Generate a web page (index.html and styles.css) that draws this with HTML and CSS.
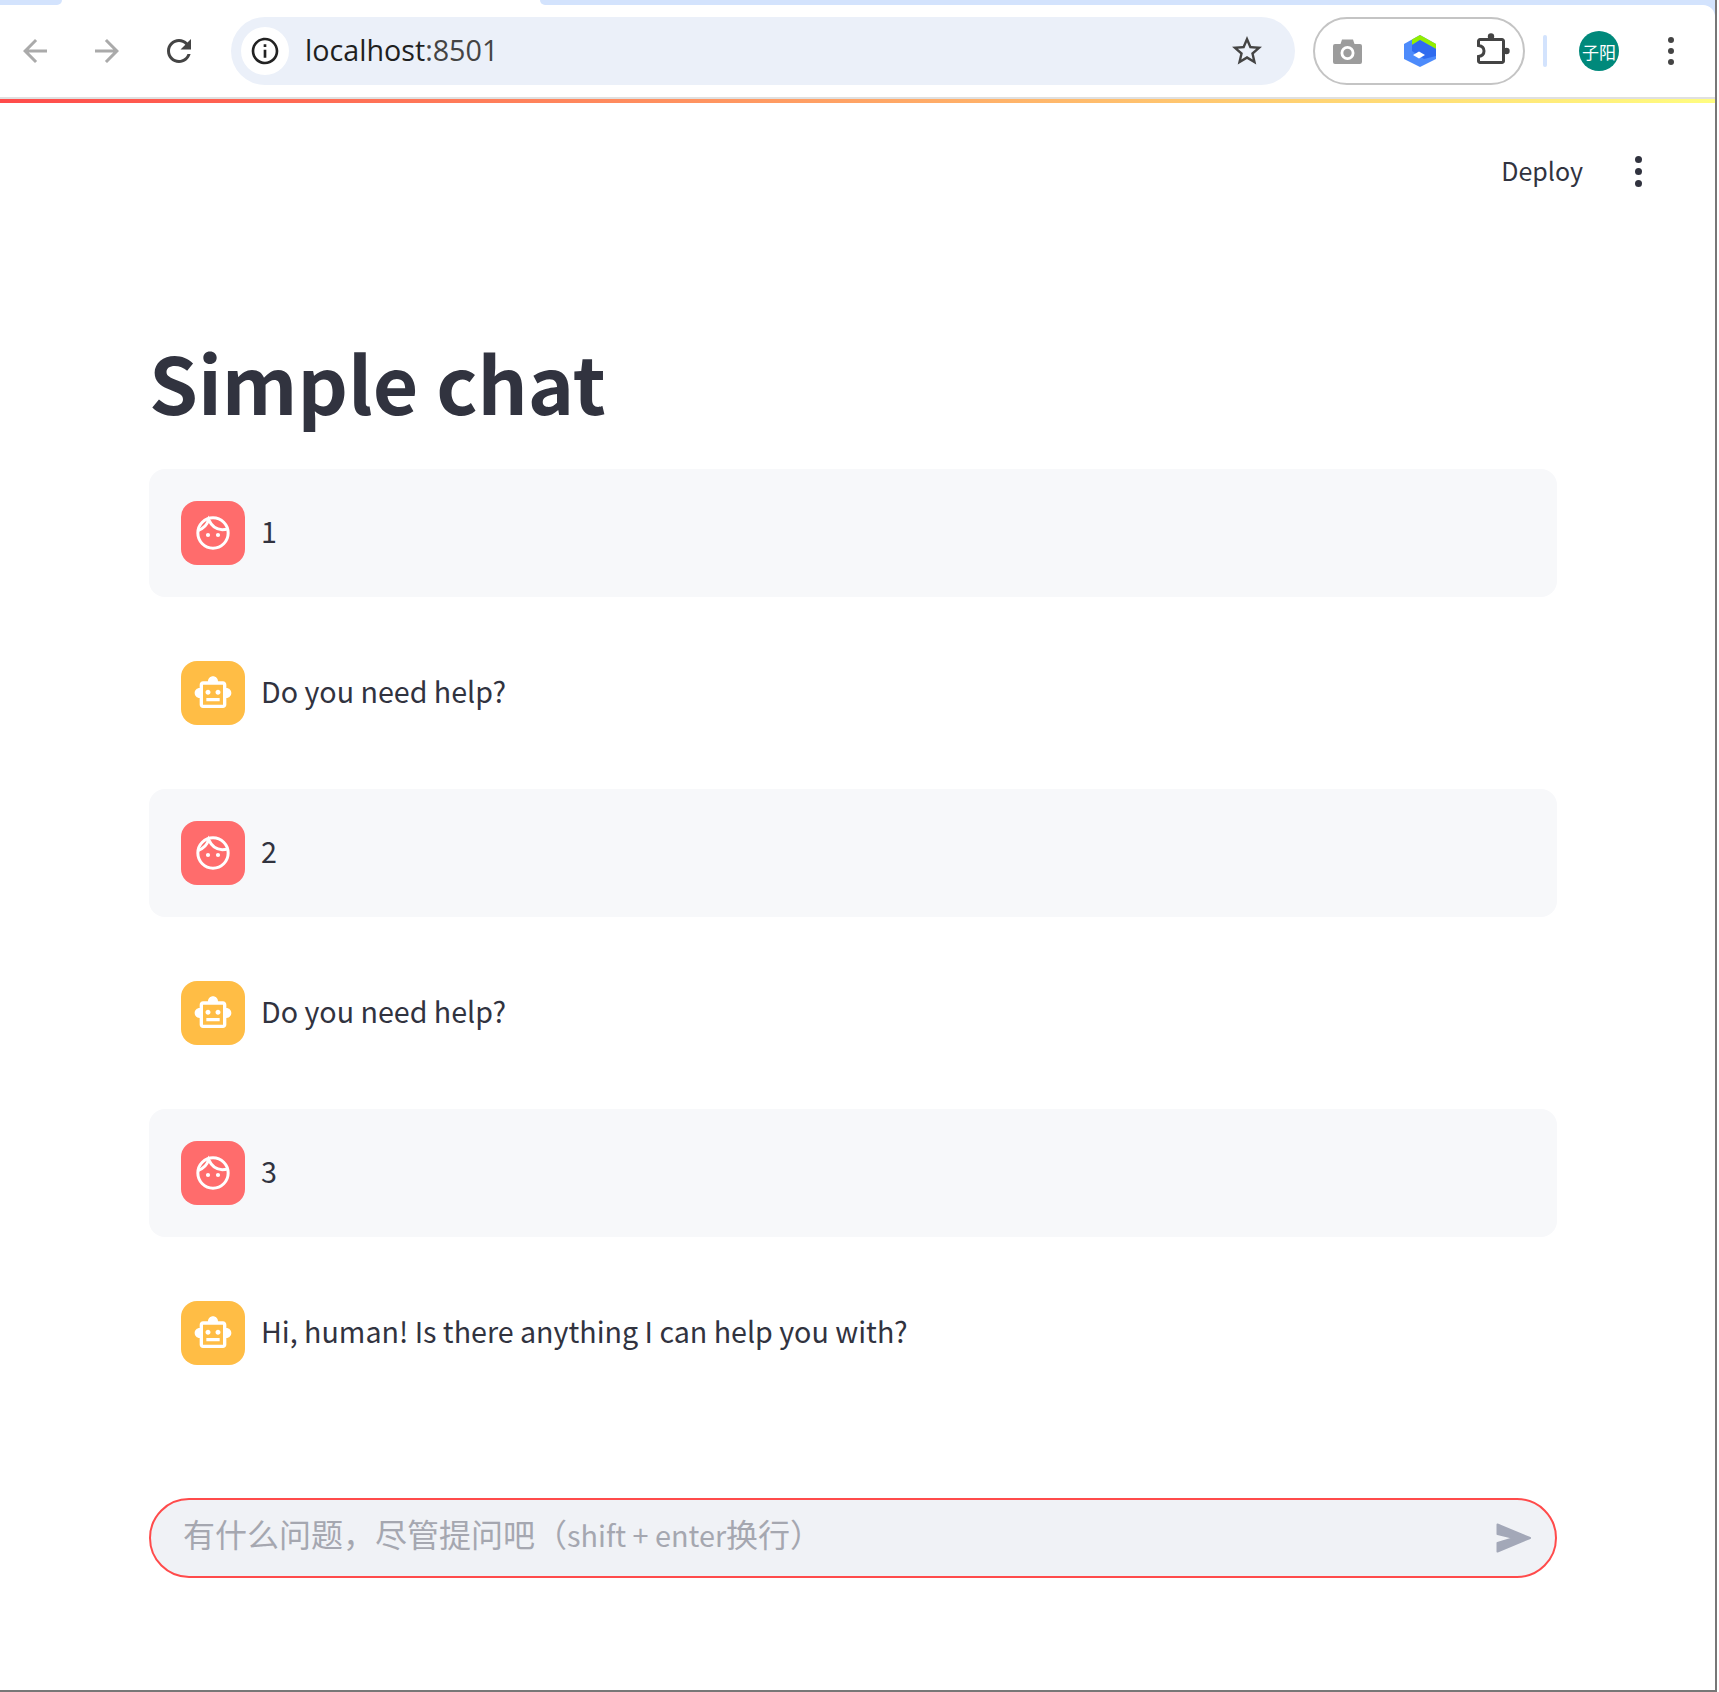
FILE: index.html
```html
<!DOCTYPE html>
<html lang="en">
<head>
    <meta charset="UTF-8">
    <meta name="viewport" content="width=device-width, initial-scale=1.0">
    <title>Simple chat</title>
    <link rel="stylesheet" href="styles.css">
</head>
<body>
    <div class="window">
        <div class="tab-strip">
            <div class="tab-gap tab-gap-left"></div>
            <div class="tab-active"></div>
            <div class="tab-gap tab-gap-right"></div>
        </div>
        <div class="toolbar-bg">
            <div class="toolbar">
                <svg class="nav-icon nav-disabled" viewBox="0 0 24 24"><path d="M20 11H7.83l5.59-5.59L12 4l-8 8 8 8 1.41-1.41L7.83 13H20v-2z"/></svg>
                <svg class="nav-icon nav-disabled" viewBox="0 0 24 24"><path d="M4 11h12.17l-5.59-5.59L12 4l8 8-8 8-1.41-1.41L16.17 13H4v-2z"/></svg>
                <svg class="nav-icon nav-reload" viewBox="0 0 24 24"><path d="M17.65 6.35C16.2 4.9 14.21 4 12 4c-4.42 0-7.99 3.58-7.99 8s3.57 8 7.99 8c3.73 0 6.84-2.55 7.73-6h-2.08c-.82 2.33-3.04 4-5.65 4-3.31 0-6-2.69-6-6s2.69-6 6-6c1.66 0 3.14.69 4.22 1.78L13 11h7V4l-2.35 2.35z"/></svg>
                <div class="omnibox">
                    <div class="site-info">
                        <svg viewBox="0 0 24 24"><path d="M11 7h2v2h-2zm0 4h2v6h-2zm1-9C6.48 2 2 6.48 2 12s4.48 10 10 10 10-4.48 10-10S17.52 2 12 2zm0 18c-4.41 0-8-3.59-8-8s3.59-8 8-8 8 3.59 8 8-3.59 8-8 8z"/></svg>
                    </div>
                    <div class="url"><span class="url-host">localhost</span>:8501</div>
                    <svg class="star" viewBox="0 0 24 24"><path d="M22 9.24l-7.19-.62L12 2 9.19 8.63 2 9.24l5.46 4.73L5.82 21 12 17.27 18.18 21l-1.63-7.03L22 9.24zM12 15.4l-3.76 2.27 1-4.28-3.32-2.88 4.38-.38L12 6.1l1.71 4.04 4.38.38-3.32 2.88 1 4.28L12 15.4z"/></svg>
                </div>
                <div class="extensions">
                    <svg class="ext-camera" viewBox="0 0 29 25">
                        <path d="M2 5h5.500L9 .5h11L21.500 5H27a2 2 0 0 1 2 2v16a2 2 0 0 1-2 2H2a2 2 0 0 1-2-2V7a2 2 0 0 1 2-2z" fill="#9c9c9c"/>
                        <circle cx="14.500" cy="14" r="7" fill="#fff"/>
                        <circle cx="14.500" cy="14" r="4.200" fill="#9c9c9c"/>
                    </svg>
                    <svg class="ext-hex" viewBox="0 0 32 32">
                        <path d="M16 0l16 9v15l-16 8-16-8V9z" fill="#4d8bfb"/>
                        <path d="M8 4.500L16 0l16 9v5L16 5l-8 5z" fill="#93ee00"/>
                        <path d="M8 10l8-5 16 9v7l-12 3-12-8z" fill="#2f6bef"/>
                        <path d="M15 16.500l6 3.500-6 3.500L9 20z" fill="#fff"/>
                    </svg>
                    <svg class="ext-puzzle" viewBox="0 0 33 32">
                        <path class="puzzle-line" d="M3 6.500h22a1.500 1.500 0 0 1 1.500 1.500v20a1.500 1.500 0 0 1-1.500 1.500H3A1.500 1.500 0 0 1 1.500 28v-4.500q5.500-.8 5.500-5.500t-5.500-5.500V8A1.500 1.500 0 0 1 3 6.500z"/>
                        <circle cx="14" cy="3.500" r="3.200"/>
                        <circle cx="29.500" cy="18" r="3.200"/>
                    </svg>
                </div>
                <div class="toolbar-sep"></div>
                <div class="profile">子阳</div>
                <div class="kebab kebab-chrome"><span></span><span></span><span></span></div>
            </div>
        </div>
        <div class="toolbar-line"></div>
        <div class="decoration"></div>

        <header class="app-header">
            <span class="deploy">Deploy</span>
            <div class="kebab kebab-app"><span></span><span></span><span></span></div>
        </header>

        <main class="app-main">
            <h1 class="app-title">Simple chat</h1>

            <div class="message message-user">
                <div class="avatar avatar-user">
                    <svg viewBox="0 0 24 24"><circle class="face-line" cx="12" cy="12" r="9.1"/><path class="face-line" d="M3 10.500C6 9.500 8.500 7 9.400 4 11 7.500 14 10 17.500 10 18.800 10 20 9.800 21 9.500"/><circle cx="9" cy="13.200" r="1.250"/><circle cx="15" cy="13.200" r="1.250"/></svg>
                </div>
                <p>1</p>
            </div>
            <div class="message">
                <div class="avatar avatar-bot">
                    <svg viewBox="0 0 24 24"><path d="M20 9V7c0-1.100-.9-2-2-2h-3c0-1.660-1.340-3-3-3S9 3.340 9 5H6c-1.100 0-2 .9-2 2v2c-1.660 0-3 1.340-3 3s1.340 3 3 3v4c0 1.100.9 2 2 2h12c1.100 0 2-.9 2-2v-4c1.660 0 3-1.340 3-3s-1.340-3-3-3zm-2 10H6V7h12v12zM9 13c-.83 0-1.500-.67-1.500-1.500S8.170 10 9 10s1.500.67 1.500 1.500S9.830 13 9 13zm6 0c-.83 0-1.500-.67-1.500-1.500S14.170 10 15 10s1.500.67 1.500 1.500S15.830 13 15 13zm-7 2h8v2H8v-2z"/></svg>
                </div>
                <p>Do you need help?</p>
            </div>
            <div class="message message-user">
                <div class="avatar avatar-user">
                    <svg viewBox="0 0 24 24"><circle class="face-line" cx="12" cy="12" r="9.1"/><path class="face-line" d="M3 10.500C6 9.500 8.500 7 9.400 4 11 7.500 14 10 17.500 10 18.800 10 20 9.800 21 9.500"/><circle cx="9" cy="13.200" r="1.250"/><circle cx="15" cy="13.200" r="1.250"/></svg>
                </div>
                <p>2</p>
            </div>
            <div class="message">
                <div class="avatar avatar-bot">
                    <svg viewBox="0 0 24 24"><path d="M20 9V7c0-1.100-.9-2-2-2h-3c0-1.660-1.340-3-3-3S9 3.340 9 5H6c-1.100 0-2 .9-2 2v2c-1.660 0-3 1.340-3 3s1.340 3 3 3v4c0 1.100.9 2 2 2h12c1.100 0 2-.9 2-2v-4c1.660 0 3-1.340 3-3s-1.340-3-3-3zm-2 10H6V7h12v12zM9 13c-.83 0-1.500-.67-1.500-1.500S8.170 10 9 10s1.500.67 1.500 1.500S9.830 13 9 13zm6 0c-.83 0-1.500-.67-1.500-1.500S14.170 10 15 10s1.500.67 1.500 1.500S15.830 13 15 13zm-7 2h8v2H8v-2z"/></svg>
                </div>
                <p>Do you need help?</p>
            </div>
            <div class="message message-user">
                <div class="avatar avatar-user">
                    <svg viewBox="0 0 24 24"><circle class="face-line" cx="12" cy="12" r="9.1"/><path class="face-line" d="M3 10.500C6 9.500 8.500 7 9.400 4 11 7.500 14 10 17.500 10 18.800 10 20 9.800 21 9.500"/><circle cx="9" cy="13.200" r="1.250"/><circle cx="15" cy="13.200" r="1.250"/></svg>
                </div>
                <p>3</p>
            </div>
            <div class="message">
                <div class="avatar avatar-bot">
                    <svg viewBox="0 0 24 24"><path d="M20 9V7c0-1.100-.9-2-2-2h-3c0-1.660-1.340-3-3-3S9 3.340 9 5H6c-1.100 0-2 .9-2 2v2c-1.660 0-3 1.340-3 3s1.340 3 3 3v4c0 1.100.9 2 2 2h12c1.100 0 2-.9 2-2v-4c1.660 0 3-1.340 3-3s-1.340-3-3-3zm-2 10H6V7h12v12zM9 13c-.83 0-1.500-.67-1.500-1.500S8.170 10 9 10s1.500.67 1.500 1.500S9.830 13 9 13zm6 0c-.83 0-1.500-.67-1.500-1.500S14.170 10 15 10s1.500.67 1.500 1.500S15.830 13 15 13zm-7 2h8v2H8v-2z"/></svg>
                </div>
                <p>Hi, human! Is there anything I can help you with?</p>
            </div>

            <div class="chat-input">
                <div class="chat-placeholder">有什么问题，尽管提问吧（<span class="placeholder-latin">shift + enter</span>换行）</div>
                <svg class="send" viewBox="0 0 36 30"><path d="M1.500 1.500L34 15 1.500 28.500v-8.500L18 15 1.500 11z"/></svg>
            </div>
        </main>
    </div>
</body>
</html>
```

FILE: styles.css
```css
* {
    box-sizing: border-box;
}

html, body {
    margin: 0;
    background-color: white;
}

body {
    font-family: "Noto Sans CJK SC", "Noto Sans", sans-serif;
    color: #31333f;
}

.window {
    width: 1717px;
    height: 1692px;
    border-right: 2px solid #777;
    border-bottom: 2px solid #777;
    overflow: hidden;
}

/* browser chrome */
.tab-strip {
    display: flex;
    height: 5px;
    background-color: white;
}

.tab-gap {
    background-color: #d3e3fd;
}

.tab-gap-left {
    width: 62px;
    border-bottom-right-radius: 8px;
}

.tab-active {
    width: 478px;
}

.tab-gap-right {
    flex: 1;
    border-bottom-left-radius: 8px;
}

.toolbar-bg {
    background-color: #d3e3fd;
}

.toolbar {
    display: flex;
    align-items: center;
    height: 92px;
    padding: 0 0 0 17px;
    background-color: white;
    border-top-right-radius: 12px;
}

.nav-icon {
    width: 36px;
    height: 36px;
    margin-right: 36px;
}

.nav-disabled {
    fill: #aaa;
}

.nav-reload {
    fill: #444;
    margin-right: 34px;
}

.omnibox {
    display: flex;
    align-items: center;
    width: 1064px;
    height: 68px;
    padding: 0 30px 0 10px;
    background-color: #ebf0f9;
    border-radius: 34px;
}

.site-info {
    display: flex;
    align-items: center;
    justify-content: center;
    width: 48px;
    height: 48px;
    border-radius: 50%;
    background-color: white;
}

.site-info svg {
    width: 32px;
    height: 32px;
    fill: #222;
}

.url {
    flex: 1;
    margin-left: 16px;
    margin-bottom: 4px;
    font-family: "Open Sans", sans-serif;
    font-size: 28.700px;
    color: #444;
}

.url-host {
    color: #1f1f1f;
}

.star {
    width: 36px;
    height: 36px;
    fill: #444;
}

.extensions {
    display: flex;
    align-items: center;
    justify-content: space-between;
    width: 212px;
    height: 68px;
    margin-left: 18px;
    padding: 0 13px 0 18px;
    border: 2px solid #c4c4c4;
    border-radius: 34px;
}

.ext-camera {
    width: 29px;
    height: 25px;
}

.ext-hex {
    width: 32px;
    height: 32px;
}

.ext-puzzle {
    width: 33px;
    height: 32px;
    margin-bottom: 4px;
    fill: #444;
}

.puzzle-line {
    fill: none;
    stroke: #444;
    stroke-width: 3;
}

.toolbar-sep {
    width: 4px;
    height: 32px;
    margin-left: 18px;
    border-radius: 2px;
    background-color: #d3e3fd;
}

.profile {
    display: flex;
    align-items: center;
    justify-content: center;
    width: 40px;
    height: 40px;
    margin-left: 32px;
    border-radius: 50%;
    background-color: #00897b;
    color: white;
    font-size: 17px;
}

.kebab {
    display: flex;
    flex-direction: column;
}

.kebab span {
    border-radius: 50%;
}

.kebab-chrome {
    gap: 5px;
    margin-left: 49px;
}

.kebab-chrome span {
    width: 6px;
    height: 6px;
    background-color: #444;
}

.toolbar-line {
    height: 2px;
    background-color: #e0e0e0;
}

.decoration {
    height: 4px;
    background: linear-gradient(90deg, #ff4b4b, #fffd80);
}

/* app */
.app-header {
    display: flex;
    justify-content: flex-end;
    align-items: center;
    gap: 52px;
    height: 68px;
    margin-top: 34px;
    padding-right: 73px;
}

.deploy {
    margin-bottom: 2px;
    font-size: 25px;
}

.kebab-app {
    gap: 5px;
}

.kebab-app span {
    width: 7px;
    height: 7px;
    background-color: #31333f;
}

.app-main {
    padding: 0 158px 0 149px;
}

.app-title {
    margin: 106px 0 0 0;
    height: 158px;
    font-size: 78.500px;
    font-weight: 700;
    line-height: 141px;
}

.message {
    display: flex;
    align-items: center;
    gap: 16px;
    height: 128px;
    margin-bottom: 32px;
    padding: 32px;
    border-radius: 16px;
}

.message p {
    margin: 0 0 4px 0;
    font-size: 28.650px;
    line-height: 64px;
}

.message-user {
    background-color: #f7f8fa;
}

.avatar {
    display: flex;
    align-items: center;
    justify-content: center;
    width: 64px;
    height: 64px;
    border-radius: 16px;
}

.avatar svg {
    width: 40px;
    height: 40px;
    fill: white;
}

.face-line {
    fill: none;
    stroke: white;
    stroke-width: 1.800;
}

.avatar-user {
    background-color: #ff6c6c;
}

.avatar-bot {
    background-color: #ffbd45;
}

.chat-input {
    display: flex;
    align-items: center;
    justify-content: space-between;
    height: 80px;
    margin-top: 101px;
    padding: 0 23px 0 32px;
    background-color: #f0f2f6;
    border: 2px solid #ff4b4b;
    border-radius: 40px;
}

.chat-placeholder {
    margin-bottom: 8px;
    font-size: 32px;
    line-height: 60px;
    color: #a5a7b0;
}

.placeholder-latin {
    font-size: 28.800px;
}

.send {
    width: 36px;
    height: 30px;
    fill: #a3a8b8;
    stroke: #a3a8b8;
    stroke-width: 2;
    stroke-linejoin: round;
}
```
